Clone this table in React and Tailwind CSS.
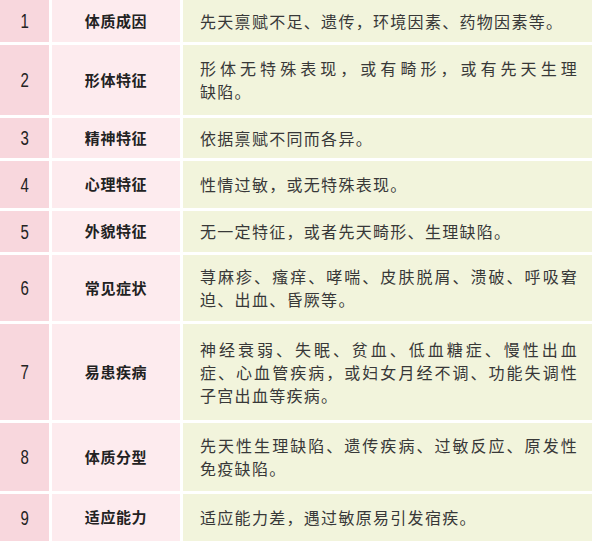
import React from "react";

const rows = [
  { no: "1", name: "体质成因", lines: ["先天禀赋不足、遗传，环境因素、药物因素等。"], h: "h-[42px]" },
  { no: "2", name: "形体特征", lines: ["形体无特殊表现，或有畸形，或有先天生理", "缺陷。"], h: "h-[70px]" },
  { no: "3", name: "精神特征", lines: ["依据禀赋不同而各异。"], h: "h-[40px]" },
  { no: "4", name: "心理特征", lines: ["性情过敏，或无特殊表现。"], h: "h-[47px]" },
  { no: "5", name: "外貌特征", lines: ["无一定特征，或者先天畸形、生理缺陷。"], h: "h-[41px]" },
  { no: "6", name: "常见症状", lines: ["荨麻疹、瘙痒、哮喘、皮肤脱屑、溃破、呼吸窘", "迫、出血、昏厥等。"], h: "h-[66px]" },
  {
    no: "7",
    name: "易患疾病",
    lines: ["神经衰弱、失眠、贫血、低血糖症、慢性出血", "症、心血管疾病，或妇女月经不调、功能失调性", "子宫出血等疾病。"],
    h: "h-[96px]",
  },
  { no: "8", name: "体质分型", lines: ["先天性生理缺陷、遗传疾病、过敏反应、原发性", "免疫缺陷。"], h: "h-[68px]" },
  { no: "9", name: "适应能力", lines: ["适应能力差，遇过敏原易引发宿疾。"], h: "h-[47px]" },
];

export default function App() {
  return (
    <div
      className="w-[592px] h-[541px] overflow-hidden bg-white"
      style={{ fontFamily: '"Noto Sans CJK SC", "Liberation Sans", sans-serif' }}
    >
      {/* table: white 3px rules between cells */}
      <div className="grid grid-cols-[49px_128px_1fr] gap-[3px]">
        {rows.map((r) => (
          <React.Fragment key={r.no}>
            <div className={`${r.h} bg-[#f8d7dd] flex items-center justify-center`}>
              <span className="inline-block text-[20px] text-[#222] scale-x-75" style={{ fontFamily: '"Liberation Sans Narrow", "Liberation Sans", sans-serif' }}>
                {r.no}
              </span>
            </div>
            <div className={`${r.h} bg-[#fdebee] flex items-center justify-center`}>
              <span className="text-[15px] font-bold tracking-[0.6px] text-[#222]">{r.name}</span>
            </div>
            <div className={`${r.h} bg-[#f2f4dc] flex items-center pl-[17px] pr-[14px]`}>
              <div className="w-full text-[16px] leading-[23px] tracking-[1.3px] text-[#383838]">
                {r.lines.map((l, i) => (
                  <span
                    key={i}
                    className={i < r.lines.length - 1 ? "block text-justify [text-align-last:justify]" : "block"}
                  >
                    {l}
                  </span>
                ))}
              </div>
            </div>
          </React.Fragment>
        ))}
      </div>
    </div>
  );
}
